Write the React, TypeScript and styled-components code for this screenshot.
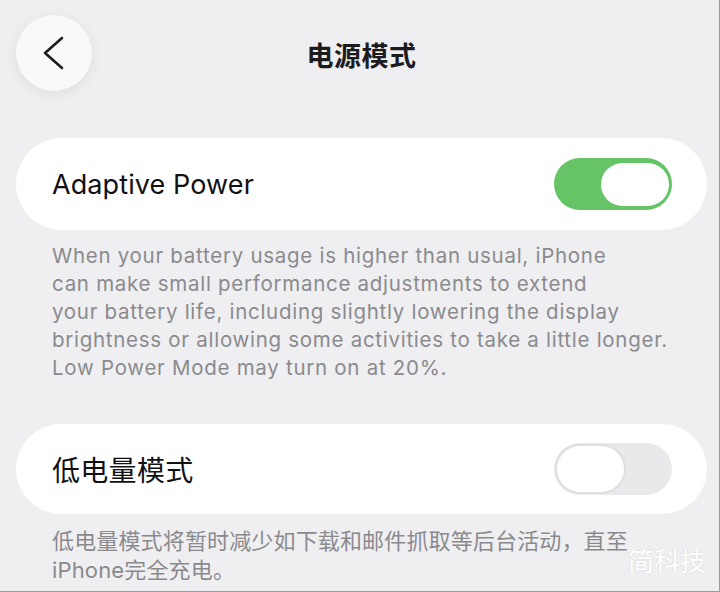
import React from "react";
import styled, { createGlobalStyle } from "styled-components";

const Global = createGlobalStyle`
  html, body { margin: 0; padding: 0; background: #efeff1; }
  * { box-sizing: border-box; }
`;

const FONT = `"Inter", "Noto Sans CJK SC", sans-serif`;

const Frame = styled.div`
  position: relative;
  width: 720px;
  height: 592px;
  overflow: hidden;
  background: #efeff1;
  border-right: 1px solid #9c9c9c;
  border-bottom: 1px solid #9c9c9c;
  padding: 15px 12px 0 16px;
  font-family: ${FONT};
`;

const Header = styled.header`
  display: grid;
  grid-template-columns: 76px 1fr 76px;
  align-items: center;
  height: 76px;
`;

const BackButton = styled.button`
  width: 76px;
  height: 76px;
  border-radius: 50%;
  border: none;
  padding: 0;
  background: #f9f9fa;
  box-shadow: 0 3px 14px rgba(0, 0, 0, 0.07);
  display: flex;
  align-items: center;
  justify-content: center;
`;

const Title = styled.h1`
  margin: 0;
  text-align: center;
  font-size: 27px;
  font-weight: 700;
  color: #1c1c1e;
  letter-spacing: 0.5px;
  transform: translateY(1px);
`;

const Card = styled.div<{ $top: number; $h: number }>`
  margin-top: ${(p) => p.$top}px;
  height: ${(p) => p.$h}px;
  border-radius: 46px;
  background: #ffffff;
  display: flex;
  align-items: center;
  justify-content: space-between;
  padding: 0 35px 0 36px;
`;

const Label = styled.span`
  font-size: 27px;
  font-weight: 400;
  color: #111113;
  letter-spacing: 0.1px;
`;

const CnLabel = styled(Label)`
  font-size: 28px;
  letter-spacing: 0.3px;
`;

const Toggle = styled.div<{ $on: boolean }>`
  width: 118px;
  height: 52px;
  border-radius: 26px;
  background: ${(p) => (p.$on ? "#65c466" : "#e9e9eb")};
  display: flex;
  align-items: center;
  justify-content: ${(p) => (p.$on ? "flex-end" : "flex-start")};
  padding: ${(p) => (p.$on ? "0 3px" : "0 1px")};
`;

const Knob = styled.div<{ $on: boolean }>`
  width: ${(p) => (p.$on ? 68 : 71)}px;
  height: ${(p) => (p.$on ? 43 : 50)}px;
  border-radius: 25px;
  background: #ffffff;
  border: ${(p) => (p.$on ? "none" : "2px solid #dfdfe1")};
`;

const Note = styled.p<{ $top: number; $lh: number; $size: number; $ls: number }>`
  margin: ${(p) => p.$top}px 0 0 0;
  padding-left: 36px;
  font-size: ${(p) => p.$size}px;
  line-height: ${(p) => p.$lh}px;
  color: #8a8a8e;
  letter-spacing: ${(p) => p.$ls}px;
`;

const Watermark = styled.span`
  position: absolute;
  right: 13px;
  bottom: 13px;
  font-size: 26px;
  color: #ffffff;
  text-shadow: 0 0 2px rgba(0, 0, 0, 0.12);
`;

export default function App() {
  return (
    <Frame>
      <Global />
      <Header>
        <BackButton aria-label="back">
          <svg width="24" height="36" viewBox="0 0 24 36">
            <polyline
              points="20,3 3,18 20,33"
              fill="none"
              stroke="#1c1c1e"
              strokeWidth="2.6"
              strokeLinecap="round"
              strokeLinejoin="round"
            />
          </svg>
        </BackButton>
        <Title>电源模式</Title>
        <span />
      </Header>

      <Card $top={47} $h={92}>
        <Label>Adaptive Power</Label>
        <Toggle $on>
          <Knob $on />
        </Toggle>
      </Card>
      <Note $top={12} $lh={28} $size={20.5} $ls={0.72}>
        When your battery usage is higher than usual, iPhone
        <br />
        can make small performance adjustments to extend
        <br />
        your battery life, including slightly lowering the display
        <br />
        brightness or allowing some activities to take a little longer.
        <br />
        Low Power Mode may turn on at 20%.
      </Note>

      <Card $top={42} $h={90}>
        <CnLabel>低电量模式</CnLabel>
        <Toggle $on={false}>
          <Knob $on={false} />
        </Toggle>
      </Card>
      <Note $top={13} $lh={29} $size={22} $ls={0.15}>
        低电量模式将暂时减少如下载和邮件抓取等后台活动，直至
        <br />
        iPhone完全充电。
      </Note>

      <Watermark>简科技</Watermark>
    </Frame>
  );
}
